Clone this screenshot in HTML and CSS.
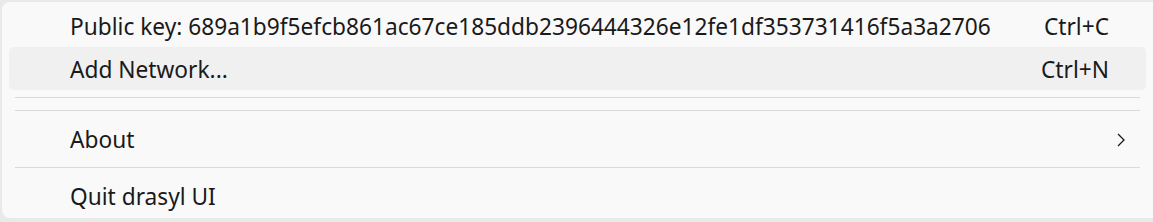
FILE: index.html
```html
<!DOCTYPE html>
<html>
<head>
<meta charset="utf-8">
<link rel="stylesheet" href="styles.css">
</head>
<body>
<div class="menu">
  <div class="item"><span class="label">Public key: 689a1b9f5efcb861ac67ce185ddb2396444326e12fe1df353731416f5a3a2706</span><span class="shortcut">Ctrl+C</span></div>
  <div class="item hover"><span class="label">Add Network...</span><span class="shortcut">Ctrl+N</span></div>
  <div class="sep"></div>
  <div class="sep sep-tight"></div>
  <div class="item"><span class="label">About</span><svg class="chev" width="10" height="16" viewBox="0 0 10 16"><path d="M2 2 L8 8 L2 14" fill="none" stroke="#1b1b1b" stroke-width="1.3"/></svg></div>
  <div class="sep"></div>
  <div class="item"><span class="label">Quit drasyl UI</span></div>
</div>
</body>
</html>
```
FILE: styles.css
```css
html, body {
  margin: 0;
  padding: 0;
  background: #e9e9e9;
  width: 1153px;
  height: 222px;
  overflow: hidden;
}
body {
  padding: 2px 0 0 2px;
  box-sizing: border-box;
}
.menu {
  width: 1160px;
  height: 216px;
  background: #f9f9f9;
  border-radius: 8px;
  box-sizing: border-box;
  padding: 2px 0 0 7px;
  font-family: "Noto Sans", sans-serif;
  font-size: 22.7px;
  color: #1a1a1a;
}
.item {
  width: 1137px;
  height: 43px;
  display: flex;
  align-items: center;
  padding: 2px 0 0 61px;
  box-sizing: border-box;
  border-radius: 5px;
}
.item.hover {
  background: #f0f0f0;
}
.label {
  flex: 1;
  white-space: nowrap;
}
.shortcut {
  margin-right: 37px;
}
.chev {
  margin-right: 20px;
}
.sep {
  width: 1125px;
  margin-left: 6px;
  height: 14px;
  box-sizing: border-box;
  padding-top: 7px;
}
.sep.sep-tight {
  height: 13px;
  padding-top: 6px;
}
.sep::after {
  content: "";
  display: block;
  height: 1px;
  background: #d9d9d9;
}
```
